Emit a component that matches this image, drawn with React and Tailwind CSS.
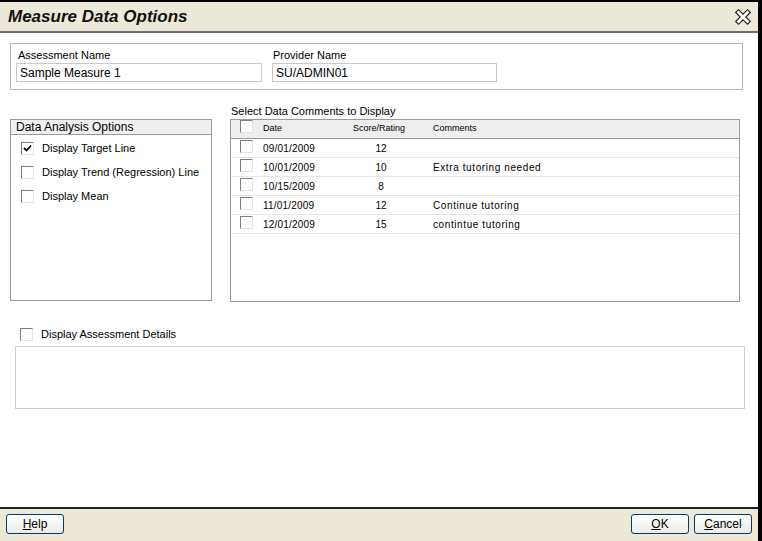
import React from 'react';

const font = { fontFamily: '"Liberation Sans", Arial, sans-serif' };

function Check({ checked }) {
  return (
    <span className="inline-flex h-[13px] w-[13px] shrink-0 items-center justify-center border-t border-l border-t-[#7f7f7f] border-l-[#7f7f7f] border-b border-r border-b-[#e3e3e3] border-r-[#e3e3e3] bg-white">
      {checked && (
        <svg width="9" height="9" viewBox="0 0 9 9">
          <path d="M1 4 L3.5 6.5 L8 1.5" stroke="#000" strokeWidth="1.8" fill="none" />
        </svg>
      )}
    </span>
  );
}

function Btn({ u, rest }) {
  return (
    <button className="flex h-[20px] w-[58px] items-center justify-center rounded-[3px] border border-[#003c74] bg-gradient-to-b from-white to-[#ecebe6] text-[12px] text-black">
      <span className="underline">{u}</span>
      {rest}
    </button>
  );
}

const rows = [
  { date: '09/01/2009', score: '12', comment: '' },
  { date: '10/01/2009', score: '10', comment: 'Extra tutoring needed' },
  { date: '10/15/2009', score: '8', comment: '' },
  { date: '11/01/2009', score: '12', comment: 'Continue tutoring' },
  { date: '12/01/2009', score: '15', comment: 'contintue tutoring' },
];

export default function App() {
  return (
    <div style={font} className="flex h-[541px] w-[762px] flex-col overflow-hidden border-t-2 border-r-4 border-black bg-white text-[11px] text-black">
      {/* Title bar */}
      <div className="flex h-[31px] shrink-0 items-center justify-between border-b-2 border-[#6e6e6e] bg-[#ece9d8] pl-[8px] pr-[6px]">
        <h1 className="text-[17px] font-bold italic text-[#111]">Measure Data Options</h1>
        <svg width="18" height="18" viewBox="0 0 16 16">
          <path
            d="M1.5 4 L4 1.5 L8 5.5 L12 1.5 L14.5 4 L10.5 8 L14.5 12 L12 14.5 L8 10.5 L4 14.5 L1.5 12 L5.5 8 Z"
            fill="#fff"
            stroke="#222"
            strokeWidth="1"
          />
        </svg>
      </div>

      <div className="flex flex-1 flex-col px-[10px] pt-[10px]">
        {/* Names */}
        <div className="flex h-[47px] w-[733px] gap-[10px] border border-[#b5b5b5] px-[5px] pt-[4px]">
          <div className="flex w-[246px] flex-col">
            <span className="pl-[2px] leading-[14px]">Assessment Name</span>
            <div className="mt-[1px] flex h-[19px] items-center border border-[#c9c9c9] px-[3px] text-[12px]">Sample Measure 1</div>
          </div>
          <div className="flex w-[225px] flex-col">
            <span className="pl-[1px] leading-[14px]">Provider Name</span>
            <div className="mt-[1px] flex h-[19px] items-center border border-[#c9c9c9] px-[3px] text-[12px]">SU/ADMIN01</div>
          </div>
        </div>

        {/* Middle */}
        <div className="mt-[13px] flex gap-[18px]">
          <div className="mt-[16px] flex h-[182px] w-[202px] flex-col border border-[#9a9a9a]">
            <div className="flex h-[15px] items-center border-b border-[#9a9a9a] bg-[#efefef] pl-[5px] text-[12px]">Data Analysis Options</div>
            <div className="flex flex-col gap-[9px] pl-[10px] pt-[6px] text-[11px]">
              <label className="flex h-[15px] items-center gap-[8px]"><Check checked />Display Target Line</label>
              <label className="flex h-[15px] items-center gap-[8px]"><Check />Display Trend (Regression) Line</label>
              <label className="flex h-[15px] items-center gap-[8px]"><Check />Display Mean</label>
            </div>
          </div>

          <div className="flex flex-col">
            <span className="pl-[1px] leading-[16px]">Select Data Comments to Display</span>
            <div className="h-[183px] w-[510px] border border-[#9a9a9a]">
              <div className="flex h-[19px] items-center border-b border-[#9a9a9a] bg-[#eeeeee] text-[9px]">
                <span className="ml-[9px] w-[23px]"><Check /></span>
                <span className="w-[90px]">Date</span>
                <span className="w-[80px]">Score/Rating</span>
                <span>Comments</span>
              </div>
              {rows.map((r) => (
                <div key={r.date} className="flex h-[19px] items-center border-b border-[#e6e6e6] text-[10px]">
                  <span className="ml-[9px] w-[23px]"><Check /></span>
                  <span className="w-[90px] tracking-[0.2px]">{r.date}</span>
                  <span className="w-[80px] pr-[24px] text-center">{r.score}</span>
                  <span className="tracking-[0.6px]">{r.comment}</span>
                </div>
              ))}
            </div>
          </div>
        </div>

        {/* Details */}
        <label className="mt-[25px] flex h-[14px] items-center gap-[8px] pl-[10px]"><Check />Display Assessment Details</label>
        <div className="ml-[5px] mt-[5px] h-[63px] w-[730px] border border-[#cfcfcf]"></div>
      </div>

      {/* Footer */}
      <div className="flex h-[34px] shrink-0 items-center justify-between border-t-2 border-[#222] bg-[#ece9d8] pb-[2px] pl-[6px] pr-[6px]">
        <Btn u="H" rest="elp" />
        <div className="flex gap-[5px]">
          <Btn u="O" rest="K" />
          <Btn u="C" rest="ancel" />
        </div>
      </div>
    </div>
  );
}
